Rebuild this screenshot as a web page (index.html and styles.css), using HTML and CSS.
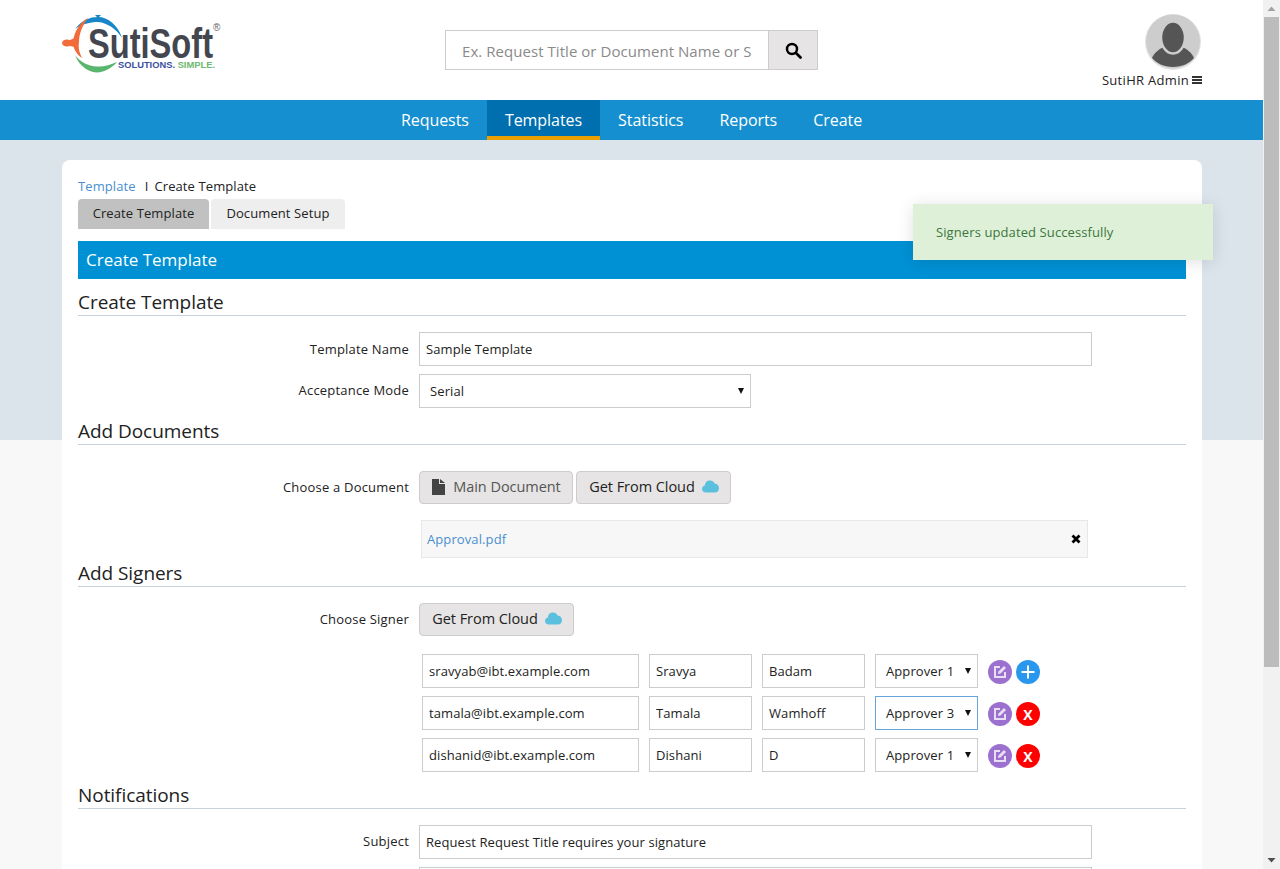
FILE: index.html
```html
<!DOCTYPE html>
<html lang="en">
<head>
<meta charset="utf-8">
<title>Create Template</title>
<link rel="stylesheet" href="styles.css">
</head>
<body>
<div class="app">
  <div class="page">
    <header class="header">
      <svg class="logo" width="170" height="68" viewBox="0 0 170 68">
        <path d="M15 19C22 10 30 7 38 7C48 7 58 15 62 28C56 19 48 13 38 12C30 12 22 14 15 19Z" fill="#1787c9"/>
        <path d="M35 5H41L38 8Z" fill="#1787c9"/>
        <path d="M28 8C20 12 14 22 13 32C13 38 16 44 22 48C19 42 18 37 19 32C19 24 22 16 28 8Z" fill="#f26b3a"/>
        <ellipse cx="7" cy="33" rx="5" ry="3.500" fill="#f26b3a"/>
        <path d="M10 30L15 28V37L10 36Z" fill="#f26b3a"/>
        <path d="M15 45C20 58 30 62 37 62.500C45 62 52 58 57 52C50 55 44 57 37 56.500C28 56 20 52 15 45Z" fill="#5ab56e"/>
        <text class="logo-name" x="28" y="48" textLength="125" lengthAdjust="spacingAndGlyphs">SutiSoft</text>
        <text class="logo-tag" x="58" y="58" textLength="97" lengthAdjust="spacingAndGlyphs"><tspan fill="#3d4f9f">SOLUTIONS.</tspan> <tspan fill="#6cb96f">SIMPLE.</tspan></text>
        <text class="logo-mark" x="153" y="21">®</text>
      </svg>
      <form class="search">
        <input class="search-input" type="text" placeholder="Ex. Request Title or Document Name or Signer">
        <button class="search-btn" type="button" aria-label="Search">
          <svg width="17" height="17" viewBox="0 0 17 17"><circle cx="7" cy="7" r="5" fill="none" stroke="#000" stroke-width="2.500"/><path d="M11 11L15.500 15.500" stroke="#000" stroke-width="2.800" stroke-linecap="round"/></svg>
        </button>
      </form>
      <div class="user">
        <svg class="avatar" width="56" height="56" viewBox="0 0 56 56">
          <circle cx="28" cy="28" r="28" fill="#e2e2e2"/>
          <circle cx="28" cy="27.500" r="27" fill="#cdcdcd"/>
          <path d="M7 44C9 39 14 35 19 33H37C42 35 47 39 49 44C45 49 37 53 28 53C19 53 11 49 7 44Z" fill="#555"/>
          <ellipse cx="28" cy="23.500" rx="12" ry="16" fill="#555" stroke="#cdcdcd" stroke-width="2.500"/>
        </svg>
        <div class="user-name">SutiHR Admin <span class="burger"></span></div>
      </div>
    </header>
    <nav class="nav">
      <a class="nav-item">Requests</a>
      <a class="nav-item active">Templates</a>
      <a class="nav-item">Statistics</a>
      <a class="nav-item">Reports</a>
      <a class="nav-item">Create</a>
    </nav>
    <main class="stage">
      <div class="card">
        <div class="crumbs"><a class="link">Template</a><span class="sep">I</span><span>Create Template</span></div>
        <div class="tabs">
          <a class="tab current">Create Template</a>
          <a class="tab">Document Setup</a>
        </div>
        <div class="banner">Create Template</div>

        <h2 class="section">Create Template</h2>
        <div class="row first">
          <label class="label">Template Name</label>
          <input class="field wide" type="text" value="Sample Template">
        </div>
        <div class="row tight">
          <label class="label up">Acceptance Mode</label>
          <div class="select mode"><span>Serial</span><i class="caret"></i></div>
        </div>

        <h2 class="section s2">Add Documents</h2>
        <div class="row docs">
          <label class="label up">Choose a Document</label>
          <button class="btn muted" type="button">
            <svg width="14" height="16" viewBox="0 0 14 16"><path d="M1 0H8V5H14V16H1ZM9 0L14 4H9Z" fill="#444"/></svg>
            <span>Main Document</span>
          </button>
          <button class="btn" type="button">
            <span>Get From Cloud</span>
            <svg class="cloud" width="17" height="13" viewBox="0 0 17 13"><path d="M4 12.500C1.500 12.500 0 11 0 8.800C0 7 1.200 5.700 2.800 5.400C3 2.500 5 .5 8 .5C10.500 .5 12 2 12.800 3.800C15 3.500 17 5.500 17 8.200C17 11 15 12.500 13 12.500Z" fill="#5bc0de"/></svg>
          </button>
        </div>
        <div class="file">
          <a class="link">Approval.pdf</a>
          <svg width="10" height="10" viewBox="0 0 10 10"><path d="M1.500 1.500L8.500 8.500M8.500 1.500L1.500 8.500" stroke="#000" stroke-width="2.800"/></svg>
        </div>

        <h2 class="section s3">Add Signers</h2>
        <div class="row signer-pick">
          <label class="label up">Choose Signer</label>
          <button class="btn pick" type="button">
            <span>Get From Cloud</span>
            <svg class="cloud" width="17" height="13" viewBox="0 0 17 13"><path d="M4 12.500C1.500 12.500 0 11 0 8.800C0 7 1.200 5.700 2.800 5.400C3 2.500 5 .5 8 .5C10.500 .5 12 2 12.800 3.800C15 3.500 17 5.500 17 8.200C17 11 15 12.500 13 12.500Z" fill="#5bc0de"/></svg>
          </button>
        </div>
        <div class="signers">
          <div class="signer">
            <input class="field email" type="text" value="sravyab@ibt.example.com">
            <input class="field name" type="text" value="Sravya">
            <input class="field name" type="text" value="Badam">
            <div class="select role"><span>Approver 1</span><i class="caret"></i></div>
            <span class="round edit"><svg width="16" height="16" viewBox="0 0 16 16"><path d="M8 3H3V13H13V8" fill="none" stroke="#e9dff5" stroke-width="2"/><path d="M6.500 7.500L12 2L14 4L8.500 9.500L6 10Z" fill="#e9dff5"/></svg></span>
            <span class="round add"><svg width="16" height="16" viewBox="0 0 16 16"><path d="M8 1.500V14.500M1.500 8H14.500" stroke="#fff" stroke-width="2"/></svg></span>
          </div>
          <div class="signer">
            <input class="field email" type="text" value="tamala@ibt.example.com">
            <input class="field name" type="text" value="Tamala">
            <input class="field name" type="text" value="Wamhoff">
            <div class="select role focus"><span>Approver 3</span><i class="caret"></i></div>
            <span class="round edit"><svg width="16" height="16" viewBox="0 0 16 16"><path d="M8 3H3V13H13V8" fill="none" stroke="#e9dff5" stroke-width="2"/><path d="M6.500 7.500L12 2L14 4L8.500 9.500L6 10Z" fill="#e9dff5"/></svg></span>
            <span class="round del">X</span>
          </div>
          <div class="signer">
            <input class="field email" type="text" value="dishanid@ibt.example.com">
            <input class="field name" type="text" value="Dishani">
            <input class="field name" type="text" value="D">
            <div class="select role"><span>Approver 1</span><i class="caret"></i></div>
            <span class="round edit"><svg width="16" height="16" viewBox="0 0 16 16"><path d="M8 3H3V13H13V8" fill="none" stroke="#e9dff5" stroke-width="2"/><path d="M6.500 7.500L12 2L14 4L8.500 9.500L6 10Z" fill="#e9dff5"/></svg></span>
            <span class="round del">X</span>
          </div>
        </div>

        <h2 class="section s4">Notifications</h2>
        <div class="row first">
          <label class="label up">Subject</label>
          <input class="field wide" type="text" value="Request Request Title requires your signature">
        </div>
        <div class="row tight">
          <label class="label"></label>
          <input class="field wide" type="text">
        </div>
      </div>
      <div class="toast">Signers updated Successfully</div>
    </main>
  </div>
  <div class="scrollbar">
    <svg class="arrow" width="17" height="17" viewBox="0 0 17 17"><path d="M4.500 11L8.500 6.500L12.500 11Z" fill="#a3a3a3"/></svg>
    <div class="thumb"></div>
    <svg class="arrow end" width="17" height="17" viewBox="0 0 17 17"><path d="M4.500 6H12.500L8.500 10.500Z" fill="#505050"/></svg>
  </div>
</div>
</body>
</html>
```

FILE: styles.css
```css
* { box-sizing: border-box; }
html, body { margin: 0; height: 100%; overflow: hidden; }
body { font-family: "Open Sans", "Liberation Sans", sans-serif; font-size: 13px; letter-spacing: .1px; color: #222; background: #f8f8f8; }
.app { display: flex; height: 869px; overflow: hidden; }
.page { flex: 1; min-width: 0; }

.header { height: 100px; background: #fff; position: relative; display: flex; justify-content: center; align-items: flex-start; }
.logo { position: absolute; left: 60px; top: 10px; overflow: visible; }
.logo-name { font-family: "Liberation Sans", sans-serif; font-size: 43px; font-weight: 700; fill: #44464f; letter-spacing: 0; }
.logo-tag { font-family: "Liberation Sans", sans-serif; font-size: 9px; font-weight: 700; letter-spacing: 0; }
.logo-mark { font-family: "Liberation Sans", sans-serif; font-size: 10px; fill: #666; letter-spacing: 0; }
.search { display: flex; width: 373px; height: 40px; margin-top: 30px; }
.search-input { flex: 1; min-width: 0; border: 1px solid #ccc; border-right: 0; padding: 1px 16px 0; font: 15px "Open Sans", sans-serif; letter-spacing: .05px; background: #fff; }
.search-input::placeholder { color: #8a8a8a; opacity: 1; }
.search-btn { width: 50px; background: #e6e4e4; border: 1px solid #ccc; padding: 0; display: flex; align-items: center; justify-content: center; }
.user { position: absolute; right: 61px; top: 14px; display: flex; flex-direction: column; align-items: flex-end; }
.avatar { display: block; margin-right: 1px; }
.user-name { margin-top: 1px; font-size: 13px; letter-spacing: .3px; line-height: 18px; white-space: nowrap; color: #222; display: flex; align-items: center; gap: 3px; }
.burger { width: 10px; height: 8px; border-top: 2px solid #333; border-bottom: 2px solid #333; position: relative; }
.burger::after { content: ""; position: absolute; left: 0; right: 0; top: 1px; height: 2px; background: #333; }

.nav { height: 40px; background: #158fd0; display: flex; justify-content: center; }
.nav-item { color: #fff; font-size: 16px; letter-spacing: -.05px; padding: 0 18px; line-height: 40px; height: 40px; }
.nav-item.active { background: #006fb0; border-bottom: 4px solid #eba000; }

.stage { position: relative; height: 729px; padding: 20px 61px 0 62px; background: linear-gradient(#dbe4eb 300px, #f8f8f8 300px); overflow: hidden; }
.card { background: #fff; border-radius: 8px 8px 0 0; padding: 16px 16px 0; height: 900px; }

.crumbs { line-height: 20px; height: 20px; margin-bottom: 3px; display: flex; }
.link { color: #4a8fd0; text-decoration: none; }
.sep { margin: 0 6px 0 9px; }
.tabs { display: flex; gap: 2px; height: 30px; }
.tab { display: flex; align-items: center; justify-content: center; padding-bottom: 2px; background: #eee; border-radius: 4px 4px 0 0; width: 134px; }
.tab.current { background: #c1c1c1; width: 131px; }
.banner { background: #0091d5; color: #fff; height: 38px; line-height: 37px; margin-top: 12px; padding-left: 8px; font-size: 17px; letter-spacing: 0; }

.section { margin: 10px 0 0; height: 27px; line-height: 27px; font-size: 19px; font-weight: 400; letter-spacing: -.05px; color: #222; border-bottom: 1px solid #c9d2da; }
.s2 { margin-top: 9px; height: 28px; line-height: 29px; }
.s3 { margin-top: 2px; height: 27px; line-height: 27px; }
.s4 { margin-top: 9px; height: 28px; line-height: 28px; }

.row { display: flex; align-items: center; }
.row.first { margin-top: 16px; }
.row.tight { margin-top: 8px; }
.row.docs { margin-top: 26px; }
.row.signer-pick { margin-top: 16px; }
.label { width: 331px; margin-right: 10px; text-align: right; color: #222; letter-spacing: .2px; }
.label.up { position: relative; top: -1px; }

.field { height: 34px; border: 1px solid #ccc; padding: 0 6px; font: 13px "Open Sans", sans-serif; letter-spacing: .08px; color: #222; background: #fff; }
.wide { width: 673px; }
.select { height: 34px; border: 1px solid #ccc; background: #fff; display: flex; align-items: center; position: relative; overflow: hidden; white-space: nowrap; }
.mode { width: 332px; padding-left: 10px; }
.caret { position: absolute; right: 6px; top: 13px; border-left: 3.500px solid transparent; border-right: 3.500px solid transparent; border-top: 6px solid #111; }
.role { width: 103px; padding-left: 10px; }
.role span { width: 68px; overflow: hidden; }
.focus { border-color: #66a6dc; }

.btn { height: 33px; border: 1px solid #ccc; border-radius: 4px; background: #e6e4e4; font: 14.500px "Open Sans", sans-serif; letter-spacing: -.05px; color: #222; display: flex; align-items: center; justify-content: center; gap: 7px; margin-right: 3px; padding: 0 0 2px 1px; width: 155px; }
.btn.muted { width: 154px; color: #555; gap: 8px; padding-left: 0; }
.pick { width: 155px; }
.file { margin: 16px 0 0 343px; width: 667px; height: 38px; background: #f7f7f7; border: 1px solid #e7e7e7; display: flex; align-items: center; justify-content: space-between; padding: 0 6px 0 5px; }

.signers { margin: 18px 0 0 344px; display: flex; flex-direction: column; gap: 8px; }
.signer { display: flex; align-items: center; gap: 10px; }
.email { width: 217px; }
.name { width: 103px; }
.round { width: 24px; height: 24px; margin-top: 2px; border-radius: 50%; display: flex; align-items: center; justify-content: center; flex: none; }
.round + .round { margin-left: -6px; }
.edit { background: #9b70cf; }
.add { background: #2a97ee; }
.del { background: #f00; color: #fff; font-weight: 700; font-size: 14px; font-family: "Open Sans", sans-serif; }

.toast { position: absolute; left: 913px; top: 64px; width: 300px; height: 56px; background: #dff0d8; color: #3c763d; letter-spacing: .1px; line-height: 56px; padding-left: 23px; box-shadow: 0 2px 16px rgba(0,0,0,.12); }

.scrollbar { width: 17px; flex: none; background: #f1f1f1; display: flex; flex-direction: column; }
.arrow { flex: none; display: block; }
.thumb { height: 650px; margin: 0 1px; background: #bcbcbc; }
.end { margin-top: auto; }
```
